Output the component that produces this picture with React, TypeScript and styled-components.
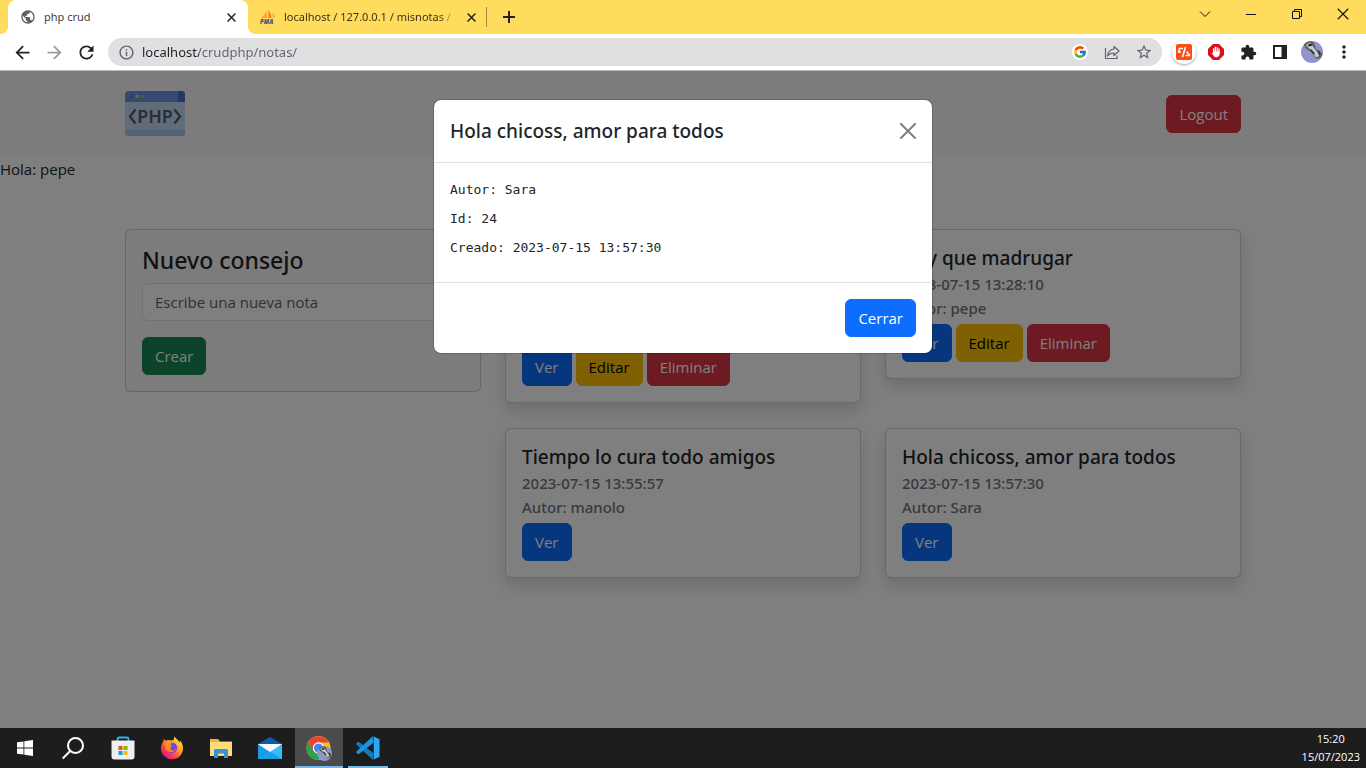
import React from "react";
import styled, { createGlobalStyle, css } from "styled-components";
import {
  MdArrowBack,
  MdArrowForward,
  MdExtension,
  MdInfoOutline,
  MdMoreVert,
  MdPublic,
  MdRefresh,
  MdStarBorder,
} from "react-icons/md";
import { FcGoogle } from "react-icons/fc";

const GlobalStyle = createGlobalStyle`
  *, *::before, *::after { box-sizing: border-box; }
  body {
    margin: 0;
    background: #fff;
    color: #212529;
    font-family: "Open Sans", "Noto Sans", sans-serif;
    font-size: 15px;
    line-height: 24px;
  }
  h1, h2, h3, p, pre { margin: 0; }
  button, input { font: inherit; }
`;

const Desktop = styled.div`
  display: flex;
  flex-direction: column;
  min-height: 100vh;
`;

/* ---------- Browser chrome ---------- */

const PlainButton = styled.button`
  display: inline-flex;
  align-items: center;
  justify-content: center;
  flex: none;
  padding: 0;
  border: 0;
  background: none;
  color: inherit;
`;

const TabStrip = styled.div`
  display: flex;
  align-items: stretch;
  height: 34px;
  padding-left: 8px;
  background: #ffdc5e;
  color: #3d3417;
  font-family: "Noto Sans", sans-serif;
  font-size: 11px;
`;

const Tab = styled.div<{ $active?: boolean }>`
  position: relative;
  display: flex;
  align-items: center;
  gap: 8px;
  width: 240px;
  padding: 0 9px 0 12px;
  ${(p) =>
    p.$active &&
    css`
      background: #fff;
      border-radius: 8px 8px 0 0;
      color: #3c4043;
      &::before,
      &::after {
        content: "";
        position: absolute;
        bottom: 0;
        width: 8px;
        height: 8px;
      }
      &::before {
        right: 100%;
        background: radial-gradient(circle at 0 0, transparent 8px, #fff 8px);
      }
      &::after {
        left: 100%;
        background: radial-gradient(circle at 100% 0, transparent 8px, #fff 8px);
      }
    `}
`;

const TabTitle = styled.span<{ $fade?: boolean }>`
  flex: 1;
  overflow: hidden;
  white-space: nowrap;
  ${(p) =>
    p.$fade &&
    css`
      mask-image: linear-gradient(to right, #000 calc(100% - 16px), transparent);
    `}
`;

const TabClose = styled(PlainButton)`
  width: 16px;
  height: 16px;
  color: #202124;
`;

const TabDivider = styled.span`
  align-self: center;
  width: 1px;
  height: 20px;
  margin-left: -2px;
  background: #a08a3b;
`;

const NewTab = styled(PlainButton)`
  width: 28px;
  margin: 0 auto 0 8px;
  color: #202124;
`;

const WindowButton = styled(PlainButton)`
  width: 46px;
  height: 28px;
  color: #111;
`;

const Toolbar = styled.div`
  display: flex;
  align-items: center;
  height: 37px;
  padding: 0 6px;
  border-bottom: 1px solid #b9babc;
  background: #fff;
  color: #202124;
`;

const ToolButton = styled(PlainButton)<{ $tint?: string }>`
  width: 32px;
  height: 28px;
  color: ${(p) => p.$tint ?? "#202124"};
`;

const AddressBar = styled.form`
  display: flex;
  align-items: center;
  flex: 1;
  height: 28px;
  margin: 0 6px;
  padding: 0 2px;
  border-radius: 14px;
  background: #e0e0e2;
  color: #5f6368;
`;

const AddressInput = styled.input`
  flex: 1;
  min-width: 0;
  padding: 0;
  border: 0;
  outline: 0;
  background: linear-gradient(to right, #202124 57px, #5f6368 57px);
  background-clip: text;
  -webkit-text-fill-color: transparent;
  font-family: "Noto Sans", sans-serif;
  font-size: 13px;
`;

/* ---------- Web page ---------- */

const Page = styled.div`
  position: relative;
  flex: 1;
  background: #fff;
`;

const Container = styled.div`
  width: 100%;
  max-width: 1140px;
  margin: 0 auto;
  padding: 0 12px;
`;

const Navbar = styled.header`
  display: flex;
  align-items: center;
  height: 86px;
  background: #f8f8fb;
`;

const NavRow = styled(Container)`
  display: flex;
  align-items: center;
  justify-content: space-between;
`;

const Board = styled(Container).attrs({ as: "main" })`
  display: grid;
  grid-template-columns: repeat(3, minmax(0, 1fr));
  align-items: start;
  column-gap: 24px;
  margin-top: 48px;
`;

const Notes = styled.section`
  grid-column: span 2;
  display: grid;
  grid-template-columns: repeat(2, minmax(0, 1fr));
  align-items: start;
  gap: 25px 24px;
`;

const tones = {
  primary: ["#0d6efd", "#fff"],
  success: ["#198754", "#fff"],
  warning: ["#ffc107", "#000"],
  danger: ["#dc3545", "#fff"],
};

const Button = styled.button<{ $tone: keyof typeof tones }>`
  height: 38px;
  padding: 0 12px;
  border: 1px solid ${(p) => tones[p.$tone][0]};
  border-radius: 6px;
  background: ${(p) => tones[p.$tone][0]};
  color: ${(p) => tones[p.$tone][1]};
`;

const heading = css`
  font-family: "Noto Sans", sans-serif;
  font-weight: 500;
`;

const Card = styled.article`
  padding: 16px;
  border: 1px solid rgba(0, 0, 0, 0.175);
  border-radius: 6px;
  background: #fff;
  box-shadow: 0 8px 16px rgba(0, 0, 0, 0.15);
`;

const CardTitle = styled.h3`
  ${heading}
  margin-bottom: 2px;
  font-size: 19px;
  line-height: 24px;
`;

const CardMeta = styled.p`
  ${heading}
  color: #6c757d;
`;

const CardActions = styled.div`
  display: flex;
  gap: 4px;
  margin-top: 4px;
`;

const FormCard = styled.form`
  padding: 16px;
  border: 1px solid rgba(0, 0, 0, 0.175);
  border-radius: 6px;
  background: #f8f8fb;
`;

const FormTitle = styled.h2`
  ${heading}
  margin-bottom: 8px;
  font-size: 23px;
  line-height: 29px;
`;

const TextField = styled.input`
  display: block;
  width: 100%;
  height: 38px;
  margin-bottom: 16px;
  padding: 0 12px;
  border: 1px solid #dee2e6;
  border-radius: 6px;
  background: #fff;
  &::placeholder {
    color: #5c636a;
    opacity: 1;
  }
`;

/* ---------- Modal ---------- */

const Backdrop = styled.div`
  position: absolute;
  inset: 0;
  padding-top: 28px;
  background: rgba(0, 0, 0, 0.5);
`;

const Dialog = styled.div`
  width: 100%;
  max-width: 500px;
  margin: 0 auto;
  border: 1px solid rgba(0, 0, 0, 0.175);
  border-radius: 8px;
  background: #fff;
  background-clip: padding-box;
`;

const DialogHeader = styled.div`
  display: flex;
  align-items: center;
  justify-content: space-between;
  padding: 16px;
  border-bottom: 1px solid #dee2e6;
`;

const DialogTitle = styled.h1`
  ${heading}
  font-size: 19px;
  line-height: 30px;
`;

const DialogBody = styled.div`
  padding: 16px;
`;

const Detail = styled.pre`
  margin-bottom: 8px;
  font-family: "DejaVu Sans Mono", monospace;
  font-size: 13px;
  line-height: 21px;
`;

const DialogFooter = styled.div`
  display: flex;
  justify-content: flex-end;
  padding: 16px;
  border-top: 1px solid #dee2e6;
`;

/* ---------- Taskbar ---------- */

const Taskbar = styled.footer`
  display: flex;
  align-items: stretch;
  gap: 1px;
  height: 40px;
  padding: 0 6px 0 1px;
  background: #1d1d1d;
  color: #fff;
`;

const TaskButton = styled(PlainButton)<{ $state?: "active" | "open" }>`
  position: relative;
  width: 48px;
  background: ${(p) => (p.$state === "active" ? "#4b4b4b" : "none")};
  &::after {
    content: "";
    display: ${(p) => (p.$state ? "block" : "none")};
    position: absolute;
    bottom: 0;
    left: ${(p) => (p.$state === "open" ? "4px" : "0")};
    right: ${(p) => (p.$state === "open" ? "4px" : "0")};
    height: 2px;
    background: #76b9ed;
  }
`;

const Clock = styled.div`
  display: flex;
  flex-direction: column;
  align-items: center;
  justify-content: center;
  margin-left: auto;
  font-size: 11px;
  line-height: 18px;
`;

/* ---------- Drawings ---------- */

const Cross = ({ size, width }: { size: number; width: number }) => (
  <svg width={size} height={size} viewBox="0 0 16 16" fill="none" stroke="currentColor" strokeWidth={width} aria-hidden="true">
    <path d="M1 1 15 15M15 1 1 15" />
  </svg>
);

const PmaIcon = () => (
  <svg width="16" height="16" viewBox="0 0 16 16" aria-hidden="true">
    <path d="M6.500 0C6 4 4 7 1 9h6z" fill="#f9a13a" />
    <path d="M8.500 1c2 2 3 5 3 8H8z" fill="#f58a1f" />
    <path d="M12 3c2 2 3 4 3 6h-2.500z" fill="#fbb45c" />
    <text x="0" y="15" fontSize="6" fontWeight="800" fontStyle="italic" fill="#51527f" fontFamily="Open Sans">PMA</text>
  </svg>
);

const PhpLogo = () => (
  <svg width="60" height="46" viewBox="0 0 60 46" role="img" aria-label="PHP">
    <path d="M0 10h60v32a3 3 0 0 1-3 3H3a3 3 0 0 1-3-3z" fill="#c3d9f7" />
    <path d="M0 39h60v3a3 3 0 0 1-3 3H3a3 3 0 0 1-3-3z" fill="#a9c5ee" />
    <path d="M4 0h52a4 4 0 0 1 4 4v7H0V4a4 4 0 0 1 4-4z" fill="#6c92e0" />
    <path d="M53 0h3a4 4 0 0 1 4 4v7h-7z" fill="#4a6fc4" />
    <circle cx="7" cy="5.500" r="1.800" fill="#8a6fb4" />
    <circle cx="12" cy="5.500" r="1.800" fill="#c8d8a0" />
    <circle cx="17" cy="5.500" r="1.800" fill="#7ecb9a" />
    <path d="M10.500 18.500 5 25.500l5.500 7M49.500 18.500l5.500 7-5.500 7" fill="none" stroke="#565c68" strokeWidth="2.400" />
    <text x="30" y="32" textAnchor="middle" fontSize="18" fontWeight="600" fill="#565c68" fontFamily="Noto Sans">PHP</text>
  </svg>
);

const ShareIcon = () => (
  <svg width="16" height="16" viewBox="0 0 16 16" fill="none" stroke="currentColor" strokeWidth="1.200" aria-hidden="true">
    <path d="M1.500 4v10.500h11.500v-3" />
    <path d="M10 2.500 15 7l-5 4.500V9C7 9 5 10 3.500 12 4 8 6 5.500 10 5z" strokeLinejoin="round" />
  </svg>
);

const SwapBadge = styled.span`
  display: inline-flex;
  align-items: center;
  justify-content: center;
  width: 24px;
  height: 24px;
  border-radius: 50%;
  background: #fff;
  box-shadow: 0 1px 3px rgba(0, 0, 0, 0.35);
`;

const SwapIcon = () => (
  <svg width="16" height="16" viewBox="0 0 16 16" aria-hidden="true">
    <rect width="16" height="16" rx="2" fill="#ff4c14" />
    <path d="M9.500 3 6.500 13M7 4.500H3.500L2.500 8H5M14 11.500H9.500M14 11.500 10.500 7.500" fill="none" stroke="#fff" strokeWidth="1.600" strokeLinejoin="round" />
  </svg>
);

const HandIcon = () => (
  <svg width="16" height="16" viewBox="0 0 16 16" aria-hidden="true">
    <path d="M5 0h6l5 5v6l-5 5H5l-5-5V5z" fill="#d8101f" />
    <path d="M5.600 9V4.600M7.400 8V3.300M9.200 8V3.600M11 9V5" stroke="#fff" strokeWidth="1.300" strokeLinecap="round" />
    <path d="M5 7.500h6.700v2.500a3.300 3.300 0 0 1-5.900 2L3.700 9.200c.5-.6 1-.5 1.600.3z" fill="#fff" />
  </svg>
);

const Portrait = ({ size }: { size: number }) => (
  <svg width={size} height={size} viewBox="0 0 22 22" aria-hidden="true">
    <circle cx="11" cy="11" r="11" fill="#9094cf" />
    <path d="M3 3.500C6-.5 11-.5 13 2l2 6 5 3c2 2 1 5-1 6l-4 1-2-3-3-4-6-4z" fill="#5f625f" />
    <path d="M5 4 9 1.500l4 5.500 4 5 1 3-3 1.500-4-6z" fill="#c9cdc8" />
    <path d="M7 4.500 11 4M9.500 8.500l4 4.500M17.500 10l1.500 4" stroke="#2b2e33" strokeWidth="1.500" />
    <circle cx="9" cy="4" r="1.300" fill="#222" />
  </svg>
);

const StoreIcon = () => (
  <svg width="24" height="24" viewBox="0 0 24 24" aria-hidden="true">
    <path d="M6.500 6V3A1.500 1.500 0 0 1 8 1.500h8A1.500 1.500 0 0 1 17.500 3v3" fill="none" stroke="#35b4ea" strokeWidth="1.800" />
    <path d="M.5 4.500h23v16a3 3 0 0 1-3 3h-17a3 3 0 0 1-3-3z" fill="#f0f0f0" />
    <path d="M7.500 10h4v4h-4z" fill="#f25022" />
    <path d="M12.500 10h4v4h-4z" fill="#7fba00" />
    <path d="M7.500 15h4v4h-4z" fill="#00a4ef" />
    <path d="M12.500 15h4v4h-4z" fill="#ffb900" />
  </svg>
);

const FirefoxIcon = () => (
  <svg width="24" height="24" viewBox="0 0 24 24" aria-hidden="true">
    <defs>
      <linearGradient id="fox" x1="0.850" y1="0.100" x2="0.200" y2="0.900">
        <stop offset="0" stopColor="#ffe14a" />
        <stop offset="0.400" stopColor="#ff9a26" />
        <stop offset="0.700" stopColor="#ff4a3d" />
        <stop offset="1" stopColor="#e31587" />
      </linearGradient>
    </defs>
    <path d="M14.500.5c1 2 4 3.500 5 6 .5-.5.500-1.500.300-2.300 2 2 3.200 5 3.200 8A11 11 0 0 1 1 12.500C1 9.500 2 7 3.500 5l.3-1.800c1 .3 1.500.8 2 1.500C7 4 8.500 4 9.500 4.300c1.500.2 3.500.2 4-.3.700-1 .5-2.500 1-3.500z" fill="url(#fox)" />
    <circle cx="12" cy="11.800" r="5.200" fill="#7542e5" />
    <path d="M5.500 7c2-1.500 4.500-1 5.500.3.500.7 2 1 3 .7-.5 1.700-2 2-3 2.500-.8.500-.5 2 1 2.200 2 .2 2.500-1.200 4-.7-.5 2.500-2.500 4-5 4-4 0-7-4-5.500-9z" fill="#ff9126" />
    <path d="M10.500 8.500c1.500-1 4-1 5 .8 1 2 .3 4.200-1.500 5-2 .8-4-.3-4.300-2 1 .7 2.800.3 3-.8.200-1-.8-1.500-2.200-3z" fill="#7542e5" />
  </svg>
);

const ExplorerIcon = () => (
  <svg width="24" height="24" viewBox="0 0 24 24" aria-hidden="true">
    <path d="M1 3h8l2 2.500h12V20H1z" fill="#f2b632" />
    <path d="M1 6h22v14H1z" fill="#ffdc7b" />
    <path d="M5 22v-7.500a1.500 1.500 0 0 1 1.500-1.500h11a1.500 1.500 0 0 1 1.500 1.500V22h-4v-4.500H9V22z" fill="#3a92cf" />
  </svg>
);

const MailIcon = () => (
  <svg width="24" height="24" viewBox="0 0 24 24" aria-hidden="true">
    <path d="M0 8 12 1l12 7v6H0z" fill="#0b5ca8" />
    <path d="M0 8h24L12 17z" fill="#f5f8fb" />
    <path d="M0 8.500 24 23H0z" fill="#1b9be6" />
    <path d="M24 8.500V23L0 23z" fill="#34bdf5" />
    <path d="M0 23 12 15.700 24 23z" fill="#1c9fe4" />
    <path d="M0 8h24l-12 7.700z" fill="#f5f8fb" />
  </svg>
);

const ChromeIcon = () => (
  <svg width="26" height="26" viewBox="0 0 26 26" aria-hidden="true">
    <circle cx="12.500" cy="13" r="12" fill="#fbc116" />
    <path d="M2.100 7a12 12 0 0 0 10.400 18l5.200-9H7.500z" fill="#2ba24c" />
    <path d="M2.100 7a12 12 0 0 1 20.800 0.500H12.500L7.300 16z" fill="#ea4335" />
    <circle cx="12.500" cy="13" r="5.700" fill="#fff" />
    <circle cx="12.500" cy="13" r="4.500" fill="#4285f4" />
    <g transform="translate(11 11)">
      <Portrait size={15} />
    </g>
  </svg>
);

const CodeIcon = () => (
  <svg width="24" height="24" viewBox="0 0 24 24" aria-hidden="true">
    <path fill="#0f7cc4" d="M17.500 17.200 3 6.100 1.800 6 .4 7.300v1.200L17 23.900z" />
    <path fill="#1f93db" d="M17.500 6.800 3 17.900l-1.200.1-1.400-1.300v-1.200L17 .1z" />
    <path fill="#2fa8f2" d="M17 .1 23.500 3.200v17.600L17 23.900c.4 0 .8-.5.8-1.200V1.300c0-.7-.4-1.200-.8-1.200z" />
  </svg>
);

/* ---------- Data ---------- */

interface Note {
  id: number;
  title: string;
  created: string;
  author: string;
  own?: boolean;
}

const notes: Note[] = [
  { id: 21, title: "Hay que tomar mucha agua durante todo el día", created: "2023-07-15 13:27:42", author: "pepe", own: true },
  { id: 22, title: "Hay que madrugar", created: "2023-07-15 13:28:10", author: "pepe", own: true },
  { id: 23, title: "Tiempo lo cura todo amigos", created: "2023-07-15 13:55:57", author: "manolo" },
  { id: 24, title: "Hola chicoss, amor para todos", created: "2023-07-15 13:57:30", author: "Sara" },
];

const selected = notes[3];

export default function App() {
  return (
    <Desktop>
      <GlobalStyle />

      <TabStrip>
        <Tab $active>
          <MdPublic size={16} color="#5f6368" />
          <TabTitle>php crud</TabTitle>
          <TabClose aria-label="Cerrar pestaña"><Cross size={9} width={2.6} /></TabClose>
        </Tab>
        <Tab>
          <PmaIcon />
          <TabTitle $fade>localhost / 127.0.0.1 / misnotas /</TabTitle>
          <TabClose aria-label="Cerrar pestaña"><Cross size={9} width={2.6} /></TabClose>
        </Tab>
        <TabDivider />
        <NewTab aria-label="Nueva pestaña">
          <svg width="12" height="12" viewBox="0 0 12 12" stroke="currentColor" strokeWidth="2"><path d="M6 0v12M0 6h12" /></svg>
        </NewTab>
        <WindowButton aria-label="Buscar pestañas">
          <svg width="12" height="12" viewBox="0 0 12 12" fill="none" stroke="currentColor"><path d="m1 3.500 5 5 5-5" /></svg>
        </WindowButton>
        <WindowButton aria-label="Minimizar">
          <svg width="10" height="10" viewBox="0 0 10 10" stroke="currentColor"><path d="M0 5.500h10" /></svg>
        </WindowButton>
        <WindowButton aria-label="Restaurar">
          <svg width="10" height="10" viewBox="0 0 10 10" fill="none" stroke="currentColor"><path d="M.5 2.500h7v7h-7zM2.500 2.500v-2h7v7h-2" /></svg>
        </WindowButton>
        <WindowButton aria-label="Cerrar"><Cross size={12} width={1.5} /></WindowButton>
      </TabStrip>

      <Toolbar>
        <ToolButton aria-label="Atrás"><MdArrowBack size={21} /></ToolButton>
        <ToolButton aria-label="Adelante" $tint="#9a9b9d"><MdArrowForward size={21} /></ToolButton>
        <ToolButton aria-label="Recargar"><MdRefresh size={21} /></ToolButton>
        <AddressBar onSubmit={(e) => e.preventDefault()}>
          <ToolButton type="button" aria-label="Información del sitio" $tint="#5f6368"><MdInfoOutline size={17} /></ToolButton>
          <AddressInput aria-label="Dirección" defaultValue="localhost/crudphp/notas/" />
          <ToolButton type="button" aria-label="Google">
            <svg width="16" height="16" viewBox="0 0 16 16">
              <circle cx="8" cy="8" r="8" fill="#fff" />
              <g transform="translate(1 1)"><FcGoogle size={14} /></g>
            </svg>
          </ToolButton>
          <ToolButton type="button" aria-label="Compartir" $tint="#5f6368"><ShareIcon /></ToolButton>
          <ToolButton type="button" aria-label="Favoritos" $tint="#5f6368"><MdStarBorder size={18} /></ToolButton>
        </AddressBar>
        <ToolButton aria-label="Extensión"><SwapBadge><SwapIcon /></SwapBadge></ToolButton>
        <ToolButton aria-label="Bloqueador"><HandIcon /></ToolButton>
        <ToolButton aria-label="Extensiones"><MdExtension size={17} /></ToolButton>
        <ToolButton aria-label="Panel lateral">
          <svg width="14" height="14" viewBox="0 0 14 14"><path d="M0 0h14v14H0zM2 2v10h6.500V2z" fill="currentColor" fillRule="evenodd" /></svg>
        </ToolButton>
        <ToolButton aria-label="Perfil"><Portrait size={22} /></ToolButton>
        <ToolButton aria-label="Menú"><MdMoreVert size={20} /></ToolButton>
      </Toolbar>

      <Page>
        <Navbar>
          <NavRow>
            <PhpLogo />
            <Button $tone="danger">Logout</Button>
          </NavRow>
        </Navbar>
        <p>Hola: pepe</p>

        <Board>
          <FormCard onSubmit={(e) => e.preventDefault()}>
            <FormTitle>Nuevo consejo</FormTitle>
            <TextField aria-label="Nuevo consejo" placeholder="Escribe una nueva nota" />
            <Button $tone="success">Crear</Button>
          </FormCard>
          <Notes>
            {notes.map((note) => (
              <Card key={note.id}>
                <CardTitle>{note.title}</CardTitle>
                <CardMeta>{note.created}</CardMeta>
                <CardMeta>Autor: {note.author}</CardMeta>
                <CardActions>
                  <Button $tone="primary">Ver</Button>
                  {note.own && <Button $tone="warning">Editar</Button>}
                  {note.own && <Button $tone="danger">Eliminar</Button>}
                </CardActions>
              </Card>
            ))}
          </Notes>
        </Board>

        <Backdrop>
          <Dialog role="dialog" aria-modal="true" aria-labelledby="dialog-title">
            <DialogHeader>
              <DialogTitle id="dialog-title">{selected.title}</DialogTitle>
              <PlainButton aria-label="Cerrar">
                <svg width="16" height="16" viewBox="0 0 16 16" stroke="#7f7f7f" strokeWidth="2" strokeLinecap="round"><path d="m1 1 14 14M15 1 1 15" /></svg>
              </PlainButton>
            </DialogHeader>
            <DialogBody>
              <Detail>Autor: {selected.author}</Detail>
              <Detail>Id: {selected.id}</Detail>
              <Detail>Creado: {selected.created}</Detail>
            </DialogBody>
            <DialogFooter>
              <Button $tone="primary">Cerrar</Button>
            </DialogFooter>
          </Dialog>
        </Backdrop>
      </Page>

      <Taskbar>
        <TaskButton aria-label="Inicio">
          <svg width="16" height="16" viewBox="0 0 16 16" fill="currentColor"><path d="M0 2.300 6.500 1.400v6.200H0zM7.300 1.300 16 0v7.600H7.300zM0 8.400h6.500v6.200L0 13.700zM7.300 8.400H16V16l-8.700-1.300z" /></svg>
        </TaskButton>
        <TaskButton aria-label="Buscar">
          <svg width="24" height="24" viewBox="0 0 24 24" fill="none" stroke="currentColor" strokeWidth="2"><circle cx="13.500" cy="9.500" r="7.500" /><path d="M8.200 15 .7 22.500" /></svg>
        </TaskButton>
        <TaskButton aria-label="Microsoft Store"><StoreIcon /></TaskButton>
        <TaskButton aria-label="Firefox"><FirefoxIcon /></TaskButton>
        <TaskButton aria-label="Explorador de archivos"><ExplorerIcon /></TaskButton>
        <TaskButton aria-label="Correo"><MailIcon /></TaskButton>
        <TaskButton aria-label="Google Chrome" $state="active"><ChromeIcon /></TaskButton>
        <TaskButton aria-label="Visual Studio Code" $state="open"><CodeIcon /></TaskButton>
        <Clock>
          <time>15:20</time>
          <time>15/07/2023</time>
        </Clock>
      </Taskbar>
    </Desktop>
  );
}
